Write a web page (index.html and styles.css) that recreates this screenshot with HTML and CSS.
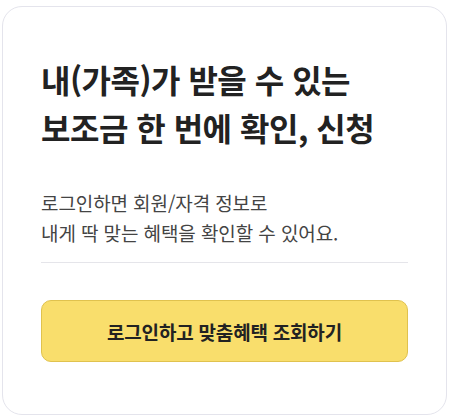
FILE: index.html
```html
<!DOCTYPE html>
<html lang="ko">
<head>
<meta charset="utf-8">
<link rel="stylesheet" href="styles.css">
</head>
<body>
<div class="card">
  <h1 class="title">내(가족)가 받을 수 있는<br>보조금 한 번에 확인, 신청</h1>
  <p class="desc">로그인하면 회원/자격 정보로<br>내게 딱 맞는 혜택을 확인할 수 있어요.</p>
  <hr class="divider">
  <button class="login-btn" type="button">로그인하고 맞춤혜택 조회하기</button>
</div>
</body>
</html>
```
FILE: styles.css
```css
html, body {
  margin: 0;
  padding: 0;
  background: #ffffff;
}
body {
  padding: 6px 0 0 2px;
  font-family: "Noto Sans CJK KR", "Noto Sans", sans-serif;
}
.card {
  box-sizing: border-box;
  width: 445px;
  height: 409px;
  border: 1px solid #e4e4ec;
  border-radius: 20px;
  padding: 48px 38px 0 38px;
  display: flex;
  flex-direction: column;
}
.title {
  margin: 0;
  font-size: 32px;
  font-weight: 700;
  line-height: 48px;
  letter-spacing: -0.5px;
  color: #222222;
}
.desc {
  margin: 37px 0 0 0;
  font-size: 19px;
  font-weight: 400;
  line-height: 30px;
  letter-spacing: -0.1px;
  color: #444444;
}
.divider {
  margin: 14px 0 0 0;
  border: 0;
  border-top: 1px solid #e5e5ea;
  height: 0;
}
.login-btn {
  margin-top: 37px;
  height: 62px;
  width: 100%;
  border: 1px solid #e0c24e;
  border-radius: 10px;
  background: #f9de6c;
  font-family: inherit;
  font-size: 19px;
  font-weight: 700;
  letter-spacing: -0.2px;
  color: #222222;
  cursor: pointer;
}
```
